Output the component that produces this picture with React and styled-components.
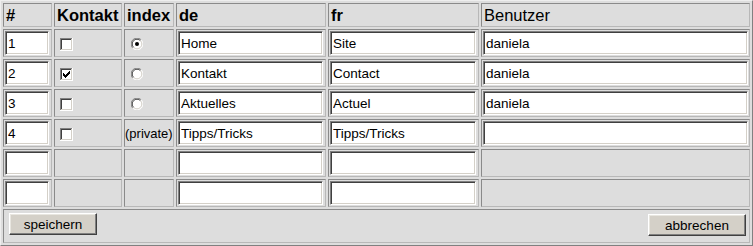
import React from "react";
import styled, { createGlobalStyle } from "styled-components";

const Global = createGlobalStyle`
  * { box-sizing: border-box; }
  html, body { margin: 0; padding: 0; background: #dddddd; }
  body { font-family: "Liberation Sans", Arial, sans-serif; color: #000; }
`;

const Grid = styled.table`
  width: 753px;
  table-layout: fixed;
  border-collapse: separate;
  border-spacing: 2px;
  border: 1px solid;
  border-color: #eeeeee #808080 #808080 #eeeeee;
  background: #dddddd;
`;

const HeadCell = styled.th`
  width: ${(p) => p.$w}px;
  height: 24px;
  padding: 0 2px;
  text-align: left;
  vertical-align: middle;
  font-size: 16.5px;
  font-weight: ${(p) => (p.$plain ? 400 : 700)};
  border: 1px solid;
  border-color: #8a8a8a #b8b8b8 #b8b8b8 #8a8a8a;
  white-space: nowrap;
`;

const Cell = styled.td`
  height: 28px;
  padding: 1px;
  vertical-align: middle;
  border: 1px solid;
  border-color: #8a8a8a #b8b8b8 #b8b8b8 #8a8a8a;
  font-size: 13px;
  white-space: nowrap;
  overflow: visible;
`;

const ActionCell = styled.td`
  height: 34px;
  padding: 3px 3px 0 5px;
  vertical-align: top;
  border: 1px solid;
  border-color: #8a8a8a #b8b8b8 #b8b8b8 #8a8a8a;
`;

const ActionBar = styled.div`
  display: flex;
  justify-content: space-between;
  align-items: flex-start;
`;

const TextInput = styled.input`
  display: block;
  width: ${(p) => p.$w}px;
  height: 24px;
  margin: 0;
  padding: 0 2px;
  font-family: "Liberation Sans", Arial, sans-serif;
  font-size: 13.5px;
  color: #000;
  background: #fff;
  border: 1px solid;
  border-color: #808080 #ffffff #ffffff #808080;
  box-shadow: inset 1px 1px 0 #404040, inset -1px -1px 0 #d4d0c8;
  outline: none;
`;

const BoxWrap = styled.span`
  display: inline-flex;
  margin-left: ${(p) => p.$ml}px;
  vertical-align: middle;
`;

const PrivateNote = styled.span`
  font-size: 13px;
  margin-left: -1px;
`;

const Button = styled.button`
  width: ${(p) => p.$w}px;
  height: 22px;
  margin: ${(p) => (p.$offset ? "1px 0 0 0" : "0")};
  padding: 0;
  font-family: "Liberation Sans", Arial, sans-serif;
  font-size: 13.5px;
  color: #000;
  background: #d4d0c8;
  border: 1px solid;
  border-color: #ffffff #404040 #404040 #ffffff;
  box-shadow: inset -1px -1px 0 #808080, inset 1px 1px 0 #e8e6e0;
  cursor: default;
`;

function CheckBox({ checked }) {
  return (
    <BoxWrap $ml={4}>
      <svg width="13" height="13" viewBox="0 0 13 13" shapeRendering="crispEdges">
        <rect x="0" y="0" width="13" height="13" fill="#ffffff" />
        <rect x="0" y="0" width="12" height="1" fill="#808080" />
        <rect x="0" y="0" width="1" height="12" fill="#808080" />
        <rect x="1" y="1" width="10" height="1" fill="#404040" />
        <rect x="1" y="1" width="1" height="10" fill="#404040" />
        <rect x="1" y="11" width="11" height="1" fill="#d4d0c8" />
        <rect x="11" y="1" width="1" height="11" fill="#d4d0c8" />
        {checked && (
          <path
            d="M3 5h1v1h1v1h1V6h1V5h1V4h1V3h1v3H9v1H8v1H7v1H6v1H5V9H4V8H3z"
            fill="#000"
          />
        )}
      </svg>
    </BoxWrap>
  );
}

function Radio({ checked }) {
  return (
    <BoxWrap $ml={5}>
      <svg width="12" height="12" viewBox="0 0 12 12">
        <circle cx="6" cy="6" r="5.5" fill="#ffffff" />
        <path d="M1.8 10.2 A5.5 5.5 0 0 1 10.2 1.8" fill="none" stroke="#808080" strokeWidth="1" />
        <path d="M2.6 9.4 A4.5 4.5 0 0 1 9.4 2.6" fill="none" stroke="#404040" strokeWidth="1" />
        <path d="M10.2 1.8 A5.5 5.5 0 0 1 1.8 10.2" fill="none" stroke="#ffffff" strokeWidth="1" />
        <path d="M9.4 2.6 A4.5 4.5 0 0 1 2.6 9.4" fill="none" stroke="#d4d0c8" strokeWidth="1" />
        {checked && <circle cx="6" cy="6" r="2" fill="#000" />}
      </svg>
    </BoxWrap>
  );
}

const columns = [
  { label: "#", w: 49 },
  { label: "Kontakt", w: 68 },
  { label: "index", w: 50 },
  { label: "de", w: 150 },
  { label: "fr", w: 151 },
  { label: "Benutzer", w: 269, plain: true },
];

const rows = [
  { nr: "1", kontakt: false, index: "checked", de: "Home", fr: "Site", user: "daniela" },
  { nr: "2", kontakt: true, index: "radio", de: "Kontakt", fr: "Contact", user: "daniela" },
  { nr: "3", kontakt: false, index: "radio", de: "Aktuelles", fr: "Actuel", user: "daniela" },
  { nr: "4", kontakt: false, index: "private", de: "Tipps/Tricks", fr: "Tipps/Tricks", user: "" },
];

export default function App() {
  return (
    <>
      <Global />
      <form onSubmit={(e) => e.preventDefault()}>
        <Grid>
          <thead>
            <tr>
              {columns.map((c) => (
                <HeadCell key={c.label} $w={c.w} $plain={c.plain}>
                  {c.label}
                </HeadCell>
              ))}
            </tr>
          </thead>
          <tbody>
            {rows.map((r) => (
              <tr key={r.nr}>
                <Cell><TextInput $w={44} defaultValue={r.nr} /></Cell>
                <Cell><CheckBox checked={r.kontakt} /></Cell>
                <Cell>
                  {r.index === "private" ? (
                    <PrivateNote>(private)</PrivateNote>
                  ) : (
                    <Radio checked={r.index === "checked"} />
                  )}
                </Cell>
                <Cell><TextInput $w={145} defaultValue={r.de} /></Cell>
                <Cell><TextInput $w={146} defaultValue={r.fr} /></Cell>
                <Cell><TextInput $w={265} defaultValue={r.user} /></Cell>
              </tr>
            ))}
            {[0, 1].map((i) => (
              <tr key={"empty" + i}>
                <Cell><TextInput $w={44} defaultValue="" /></Cell>
                <Cell />
                <Cell />
                <Cell><TextInput $w={145} defaultValue="" /></Cell>
                <Cell><TextInput $w={146} defaultValue="" /></Cell>
                <Cell />
              </tr>
            ))}
            <tr>
              <ActionCell colSpan={6}>
                <ActionBar>
                  <Button type="submit" $w={88}>speichern</Button>
                  <Button type="button" $w={98} $offset>abbrechen</Button>
                </ActionBar>
              </ActionCell>
            </tr>
          </tbody>
        </Grid>
      </form>
    </>
  );
}
